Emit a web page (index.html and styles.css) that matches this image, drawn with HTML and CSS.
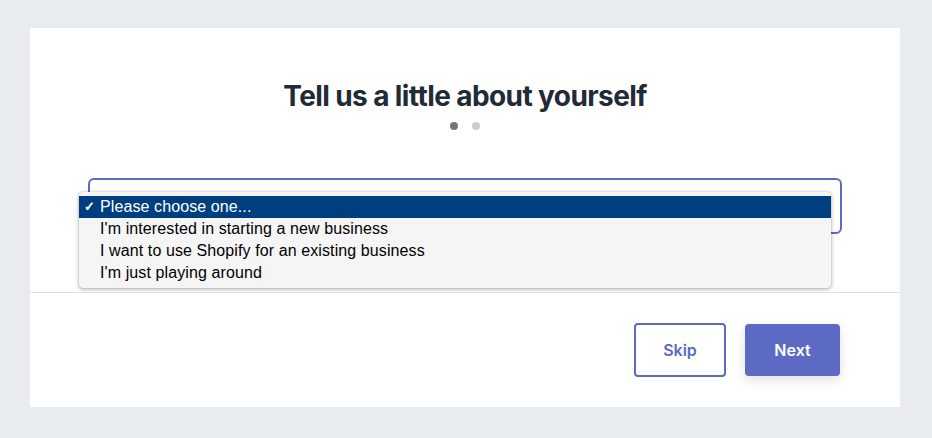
FILE: index.html
```html
<!DOCTYPE html>
<html lang="en">
<head>
    <meta charset="UTF-8">
    <meta name="viewport" content="width=device-width, initial-scale=1.0">
    <title>Tell us a little about yourself</title>
    <link rel="stylesheet" href="styles.css">
</head>
<body>

<div class="page">
    <div class="card">
        <h1 class="title">Tell us a little about yourself</h1>
        <div class="dots">
            <span class="dot active"></span>
            <span class="dot"></span>
        </div>

        <div class="field">
            <div class="select">
                <span class="select-value">Please choose one...</span>
            </div>
            <!-- open native menu -->
            <ul class="menu">
                <li class="option selected"><span class="check">✓</span>Please choose one...</li>
                <li class="option">I'm interested in starting a new business</li>
                <li class="option">I want to use Shopify for an existing business</li>
                <li class="option">I'm just playing around</li>
            </ul>
        </div>

        <div class="footer">
            <button class="btn btn-skip">Skip</button>
            <button class="btn btn-next">Next</button>
        </div>
    </div>
</div>

</body>
</html>
```

FILE: styles.css
```css
body {
    margin: 0;
    background-color: #e9ecef;
    font-family: Inter, "Noto Sans", sans-serif;
}
.page {
    padding: 28px 32px 31px 30px;
}
.card {
    background-color: #fff;
    height: 379px;
    display: flex;
    flex-direction: column;
}
.title {
    margin: 0;
    padding-top: 50px;
    text-align: center;
    font-size: 28px;
    line-height: 36px;
    font-weight: 700;
    letter-spacing: -0.6px;
    color: #212b36;
}
.dots {
    display: flex;
    justify-content: center;
    gap: 14px;
    margin-top: 8px;
}
.dot {
    width: 8px;
    height: 8px;
    border-radius: 50%;
    background-color: #cccccc;
}
.dot.active {
    background-color: #777777;
}
.field {
    position: relative;
    margin: 48px 58px 0 58px;
}
.select {
    border: 2px solid #5c6ac4;
    border-radius: 6px;
    padding: 7px 12px 3px;
    height: 42px;
}
.select-value {
    font-family: "Liberation Sans", Arial, sans-serif;
    font-size: 15px;
    color: #b5bcc4;
    line-height: 18px;
}
.menu {
    position: absolute;
    left: -9px;
    top: 14px;
    width: 752px;
    margin: 0;
    padding: 4px 0;
    list-style: none;
    background-color: #f5f5f5;
    border-radius: 4px;
    box-shadow: 0 1px 4px rgba(0, 0, 0, 0.35), 0 0 1px rgba(0, 0, 0, 0.3);
    font-family: "Liberation Sans", Arial, sans-serif;
    font-size: 16px;
    letter-spacing: 0.1px;
    color: #000;
}
.option {
    height: 22px;
    line-height: 21px;
    padding-left: 21px;
    position: relative;
}
.option.selected {
    background-color: #003f7f;
    color: #fff;
}
.check {
    position: absolute;
    left: 5px;
    font-size: 13px;
    font-weight: 700;
}
.footer {
    margin-top: 58px;
    border-top: 1px solid #dfe3e8;
    display: flex;
    justify-content: flex-end;
    gap: 19px;
    padding: 30px 60px 0 0;
}
.btn {
    height: 54px;
    border-radius: 4px;
    font-family: Inter, "Noto Sans", sans-serif;
    font-size: 16px;
    font-weight: 600;
    cursor: pointer;
}
.btn-skip {
    width: 92px;
    background-color: #fff;
    border: 2px solid #5c6ac4;
    color: #5c6ac4;
}
.btn-next {
    width: 95px;
    height: 52px;
    margin-top: 1px;
    background-color: #5c6ac4;
    border: none;
    color: #fff;
    box-shadow: 0 4px 12px rgba(0, 0, 0, 0.12);
}
```
